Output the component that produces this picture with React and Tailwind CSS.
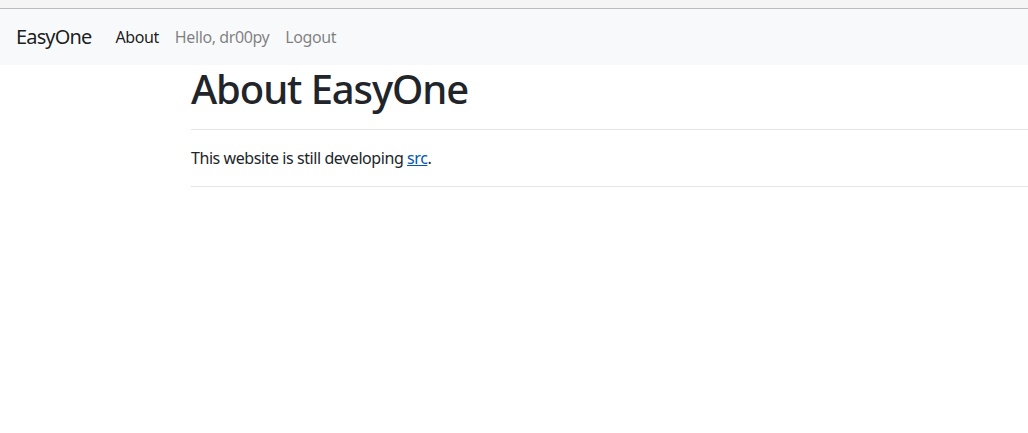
export default function App() {
  return (
    <div className="min-h-[433px] bg-white font-['Noto_Sans',sans-serif] text-[#212529]">
      {/* top strip */}
      <div className="h-2 bg-[#f5f5f5] border-b border-[#bdbdbd] box-content" />

      {/* Navbar */}
      <nav className="flex h-14 items-center bg-[#f8f9fa] px-4">
        <a className="mr-4 text-[20px] leading-[30px] tracking-[-0.85px] text-black/90">EasyOne</a>
        <ul className="flex text-base tracking-[-0.4px]">
          <li className="px-2 text-black/90">About</li>
          <li className="px-2 text-black/50">Hello, dr00py</li>
          <li className="px-2 text-black/50">Logout</li>
        </ul>
      </nav>

      {/* Content */}
      <main className="pl-[191px]">
        <h1 className="text-[40px] font-medium leading-[48px] tracking-[-1.1px]">About EasyOne</h1>
        <hr className="mt-4 border-black/10" />
        <p className="my-4 text-base leading-6 tracking-[-0.43px]">
          This website is still developing{" "}
          <a className="text-[#0056b3] underline">src</a>.
        </p>
        <hr className="border-black/10" />
      </main>
    </div>
  );
}
